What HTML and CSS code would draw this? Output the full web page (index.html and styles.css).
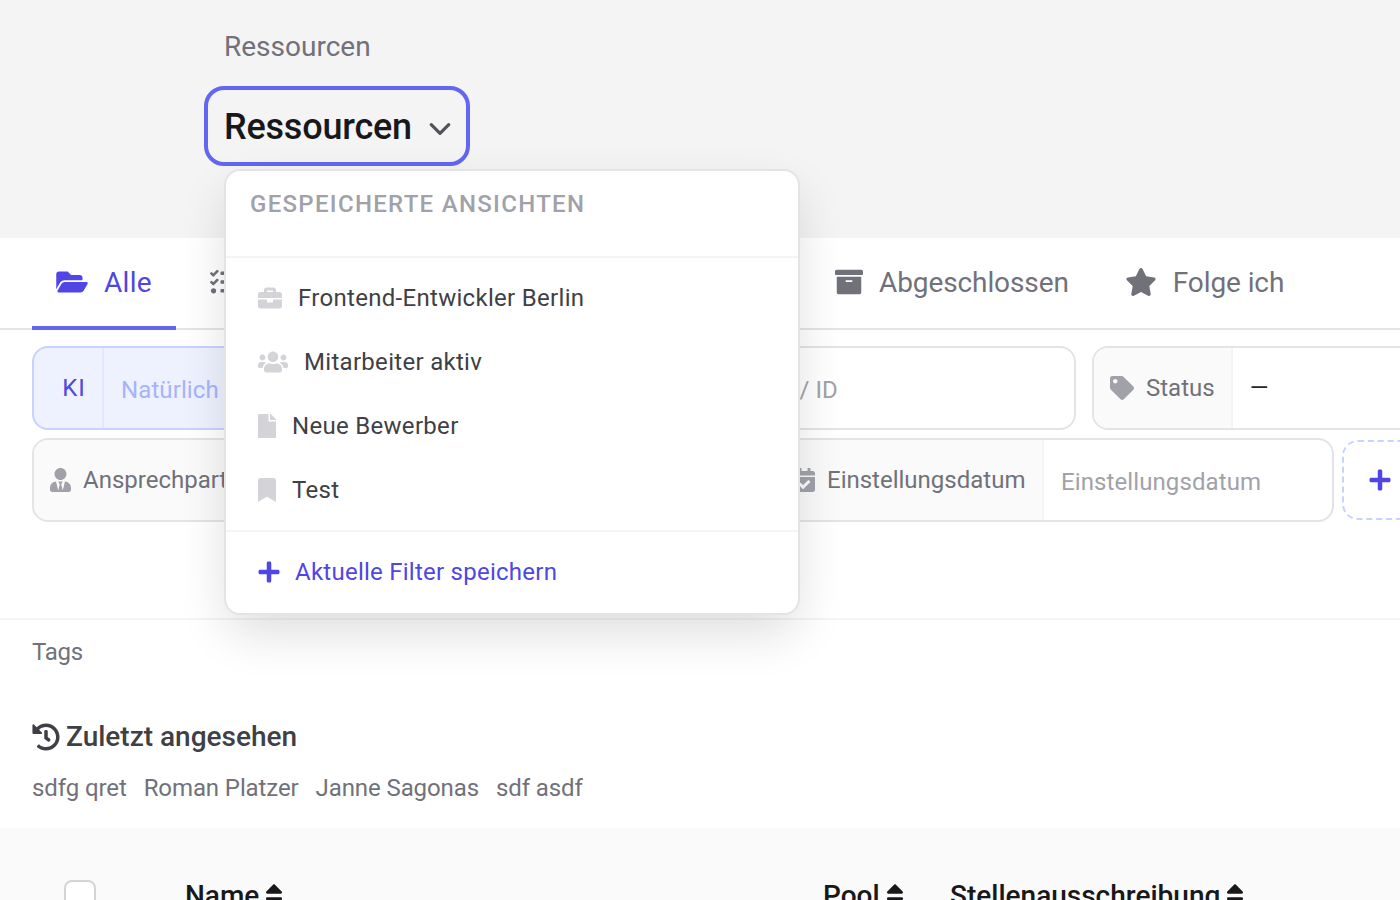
FILE: index.html
```html
<!DOCTYPE html>
<html lang="de">
<head>
    <meta charset="UTF-8">
    <title>Ressourcen</title>
    <link rel="stylesheet" href="styles.css">
</head>
<body>
    <div class="page">
        <!-- Header -->
        <div class="head">
            <div class="crumb">Ressourcen</div>
            <button class="view-btn">
                <span>Ressourcen</span>
                <svg class="chevron" viewBox="4 8 16 9"><path d="M5 9l7 7 7-7"/></svg>
            </button>
        </div>

        <!-- Tabs -->
        <div class="tabs">
            <div class="tab active">
                <svg class="tab-icon" viewBox="0 0 576 512"><path d="M572.694 292.093L500.27 416.248A63.997 63.997 0 0 1 444.989 448H45.025c-18.523 0-30.064-20.093-20.731-36.093l72.424-124.155A64 64 0 0 1 152 256h399.964c18.523 0 30.064 20.093 20.73 36.093zM152 224h328v-48c0-26.51-21.49-48-48-48H272l-64-64H48C21.49 64 0 85.49 0 112v278.046l69.077-118.418C86.214 242.25 117.989 224 152 224z"/></svg>
                Alle
            </div>
            <div class="tab tab-wide">
                <svg class="tab-icon" viewBox="0 0 512 512"><path d="M139.61 35.5a12 12 0 0 0-17 0L58.93 98.81l-22.7-22.12a12 12 0 0 0-17 0L3.53 92.41a12 12 0 0 0 0 17l47.59 47.4a12.78 12.78 0 0 0 17.61 0l15.59-15.62L156.52 69a12.09 12.09 0 0 0 .09-17zm0 159.19a12 12 0 0 0-17 0l-63.68 63.72-22.7-22.1a12 12 0 0 0-17 0L3.53 252a12 12 0 0 0 0 17L51 316.5a12.77 12.77 0 0 0 17.6 0l15.7-15.69 72.2-72.22a12 12 0 0 0 .09-16.9zM64 368c-26.49 0-48.59 21.5-48.59 48S37.53 464 64 464a48 48 0 0 0 0-96zm432 16H208a16 16 0 0 0-16 16v32a16 16 0 0 0 16 16h288a16 16 0 0 0 16-16v-32a16 16 0 0 0-16-16zm0-320H208a16 16 0 0 0-16 16v32a16 16 0 0 0 16 16h288a16 16 0 0 0 16-16V80a16 16 0 0 0-16-16zm0 160H208a16 16 0 0 0-16 16v32a16 16 0 0 0 16 16h288a16 16 0 0 0 16-16v-32a16 16 0 0 0-16-16z"/></svg>
            </div>
            <div class="tab">
                <svg class="tab-icon icon-archive" viewBox="0 0 512 512"><path d="M32 448c0 17.7 14.3 32 32 32h384c17.7 0 32-14.3 32-32V160H32v288zm160-212c0-6.6 5.4-12 12-12h104c6.6 0 12 5.4 12 12v8c0 6.6-5.4 12-12 12H204c-6.6 0-12-5.4-12-12v-8zM480 32H32C14.3 32 0 46.3 0 64v48c0 8.8 7.2 16 16 16h480c8.8 0 16-7.2 16-16V64c0-17.7-14.3-32-32-32z"/></svg>
                Abgeschlossen
            </div>
            <div class="tab">
                <svg class="tab-icon" viewBox="0 0 576 512"><path d="M259.3 17.8L194 150.2 47.9 171.5c-26.2 3.8-36.7 36.1-17.7 54.6l105.7 103-25 145.5c-4.5 26.3 23.2 46 46.4 33.7L288 439.6l130.7 68.7c23.2 12.2 50.9-7.4 46.4-33.7l-25-145.5 105.7-103c19-18.5 8.5-50.8-17.7-54.6L382 150.2 316.7 17.8c-11.7-23.6-45.6-23.9-57.4 0z"/></svg>
                Folge ich
            </div>
        </div>

        <!-- Filters -->
        <div class="filters">
            <div class="filter-row row-one">
                <div class="filter filter-ai">
                    <div class="filter-label">KI</div>
                    <div class="filter-value">Natürlich</div>
                </div>
                <div class="filter filter-search">
                    <div class="filter-value">Name / ID</div>
                </div>
                <div class="filter filter-status">
                    <div class="filter-label">
                        <svg class="filter-icon" viewBox="0 0 512 512"><path d="M0 252.118V48C0 21.49 21.49 0 48 0h204.118a48 48 0 0 1 33.941 14.059l211.882 211.882c18.745 18.745 18.745 49.137 0 67.882L293.823 497.941c-18.745 18.745-49.137 18.745-67.882 0L14.059 286.059A48 48 0 0 1 0 252.118zM112 64c-26.51 0-48 21.49-48 48s21.49 48 48 48 48-21.49 48-48-21.49-48-48-48z"/></svg>
                        Status
                    </div>
                    <div class="filter-value dash">—</div>
                </div>
            </div>
            <div class="filter-row row-two">
                <div class="filter filter-contact">
                    <div class="filter-label">
                        <svg class="filter-icon icon-narrow" viewBox="0 0 448 512"><path d="M224 256c70.7 0 128-57.3 128-128S294.7 0 224 0 96 57.3 96 128s57.3 128 128 128zm95.8 32.6L272 480l-32-136 32-56h-96l32 56-32 136-47.8-191.4C56.9 292 0 350.3 0 422.4V464c0 26.5 21.5 48 48 48h352c26.5 0 48-21.5 48-48v-41.6c0-72.1-56.9-130.4-128.2-133.8z"/></svg>
                        Ansprechpartner
                    </div>
                </div>
                <div class="filter filter-date">
                    <div class="filter-label">
                        <svg class="filter-icon icon-narrow" viewBox="0 0 448 512"><path d="M436 160H12c-6.627 0-12-5.373-12-12v-36c0-26.51 21.49-48 48-48h48V12c0-6.627 5.373-12 12-12h40c6.627 0 12 5.373 12 12v52h128V12c0-6.627 5.373-12 12-12h40c6.627 0 12 5.373 12 12v52h48c26.51 0 48 21.49 48 48v36c0 6.627-5.373 12-12 12zM12 192h424c6.627 0 12 5.373 12 12v260c0 26.51-21.49 48-48 48H48c-26.51 0-48-21.49-48-48V204c0-6.627 5.373-12 12-12zm333.296 95.947l-28.169-28.398c-4.667-4.705-12.265-4.736-16.97-.068L194.12 364.665l-45.98-46.352c-4.667-4.705-12.266-4.736-16.971-.068l-28.397 28.17c-4.705 4.667-4.736 12.265-.068 16.97l82.601 83.269c4.667 4.705 12.265 4.736 16.97.068l142.953-141.805c4.705-4.667 4.736-12.265.068-16.97z"/></svg>
                        Einstellungsdatum
                    </div>
                    <div class="filter-value">Einstellungsdatum</div>
                </div>
                <div class="add-filter">
                    <svg class="plus-icon" viewBox="0 0 448 512"><path d="M416 208H272V64c0-17.67-14.33-32-32-32h-32c-17.67 0-32 14.33-32 32v144H32c-17.67 0-32 14.33-32 32v32c0 17.67 14.33 32 32 32h144v144c0 17.67 14.33 32 32 32h32c17.67 0 32-14.33 32-32V304h144c17.67 0 32-14.33 32-32v-32c0-17.67-14.33-32-32-32z"/></svg>
                </div>
            </div>
        </div>

        <!-- Tags and recent -->
        <div class="tags">Tags</div>
        <div class="recent">
            <h2>
                <svg class="history-icon" viewBox="0 0 512 512"><path d="M504 255.531c.253 136.64-111.18 248.372-247.82 248.468-59.015.042-113.223-20.53-155.822-54.911-11.077-8.94-11.905-25.541-1.839-35.607l11.267-11.267c8.609-8.609 22.353-9.551 31.891-1.984C173.062 425.135 212.781 440 256 440c101.705 0 184-82.311 184-184 0-101.705-82.311-184-184-184-48.814 0-93.149 18.969-126.068 49.932l50.754 50.754c10.08 10.08 2.941 27.314-11.313 27.314H24c-8.837 0-16-7.163-16-16V38.627c0-14.254 17.234-21.393 27.314-11.314l49.372 49.372C129.209 34.136 189.552 8 256 8c136.81 0 247.747 110.78 248 247.531zm-180.912 78.784l9.823-12.63c8.138-10.463 6.253-25.542-4.21-33.679L288 256.349V152c0-13.255-10.745-24-24-24h-16c-13.255 0-24 10.745-24 24v135.651l65.409 50.874c10.463 8.137 25.541 6.253 33.679-4.21z"/></svg>
                Zuletzt angesehen
            </h2>
            <div class="recent-links">
                <span>sdfg qret</span>
                <span>Roman Platzer</span>
                <span>Janne Sagonas</span>
                <span>sdf asdf</span>
            </div>
        </div>

        <!-- Table head -->
        <div class="table-head">
            <div class="checkbox"></div>
            <div class="th">Name <svg class="sort-icon" viewBox="0 0 320 512"><path d="M41 288h238c21.4 0 32.1 25.9 17 41L177 448c-9.4 9.4-24.6 9.4-33.9 0L24 329c-15.1-15.1-4.4-41 17-41zm255-105L177 64c-9.4-9.4-24.6-9.4-33.9 0L24 183c-15.1 15.1-4.4 41 17 41h238c21.4 0 32.1-25.9 17-41z"/></svg></div>
            <div class="th">Pool <svg class="sort-icon" viewBox="0 0 320 512"><path d="M41 288h238c21.4 0 32.1 25.9 17 41L177 448c-9.4 9.4-24.6 9.4-33.9 0L24 329c-15.1-15.1-4.4-41 17-41zm255-105L177 64c-9.4-9.4-24.6-9.4-33.9 0L24 183c-15.1 15.1-4.4 41 17 41h238c21.4 0 32.1-25.9 17-41z"/></svg></div>
            <div class="th">Stellenausschreibung <svg class="sort-icon" viewBox="0 0 320 512"><path d="M41 288h238c21.4 0 32.1 25.9 17 41L177 448c-9.4 9.4-24.6 9.4-33.9 0L24 329c-15.1-15.1-4.4-41 17-41zm255-105L177 64c-9.4-9.4-24.6-9.4-33.9 0L24 183c-15.1 15.1-4.4 41 17 41h238c21.4 0 32.1-25.9 17-41z"/></svg></div>
        </div>

        <!-- Saved views menu -->
        <div class="menu">
            <div class="menu-title">Gespeicherte Ansichten</div>
            <div class="menu-list">
                <div class="menu-item">
                    <svg class="menu-icon icon-case" viewBox="0 0 512 512"><path d="M320 336c0 8.84-7.16 16-16 16h-96c-8.84 0-16-7.16-16-16v-48H0v144c0 25.6 22.4 48 48 48h416c25.6 0 48-22.4 48-48V288H320v48zm144-208h-80V80c0-25.6-22.4-48-48-48H176c-25.6 0-48 22.4-48 48v48H48c-25.6 0-48 22.4-48 48v80h512v-80c0-25.6-22.4-48-48-48zm-144 0H192V96h128v32z"/></svg>
                    Frontend-Entwickler Berlin
                </div>
                <div class="menu-item">
                    <svg class="menu-icon icon-users" viewBox="0 0 640 512"><path d="M96 224c35.3 0 64-28.7 64-64s-28.7-64-64-64-64 28.7-64 64 28.7 64 64 64zm448 0c35.3 0 64-28.7 64-64s-28.7-64-64-64-64 28.7-64 64 28.7 64 64 64zm32 32h-64c-17.6 0-33.5 7.1-45.1 18.6 40.3 22.1 68.9 62 75.1 109.4h66c17.7 0 32-14.3 32-32v-32c0-35.3-28.7-64-64-64zm-256 0c61.9 0 112-50.1 112-112S381.9 32 320 32 208 82.1 208 144s50.1 112 112 112zm76.8 32h-8.3c-20.8 10-43.9 16-68.5 16s-47.6-6-68.5-16h-8.3C179.6 288 128 339.6 128 403.2V432c0 26.5 21.5 48 48 48h288c26.5 0 48-21.5 48-48v-28.8c0-63.6-51.6-115.2-115.2-115.2zm-223.7-13.4C161.5 263.1 145.6 256 128 256H64c-35.3 0-64 28.7-64 64v32c0 17.7 14.3 32 32 32h65.9c6.3-47.4 34.9-87.3 75.2-109.4z"/></svg>
                    Mitarbeiter aktiv
                </div>
                <div class="menu-item">
                    <svg class="menu-icon icon-page" viewBox="0 0 384 512"><path d="M224 136V0H24C10.7 0 0 10.7 0 24v464c0 13.3 10.7 24 24 24h336c13.3 0 24-10.7 24-24V160H248c-13.2 0-24-10.8-24-24zm160-14.1v6.1H256V0h6.1c6.4 0 12.5 2.5 17 7l97.9 98c4.5 4.5 7 10.6 7 16.9z"/></svg>
                    Neue Bewerber
                </div>
                <div class="menu-item">
                    <svg class="menu-icon icon-page" viewBox="0 0 384 512"><path d="M0 512V48C0 21.49 21.49 0 48 0h288c26.51 0 48 21.49 48 48v464L192 400 0 512z"/></svg>
                    Test
                </div>
            </div>
            <div class="menu-foot">
                <svg class="plus-icon" viewBox="0 0 448 512"><path d="M416 208H272V64c0-17.67-14.33-32-32-32h-32c-17.67 0-32 14.33-32 32v144H32c-17.67 0-32 14.33-32 32v32c0 17.67 14.33 32 32 32h144v144c0 17.67 14.33 32 32 32h32c17.67 0 32-14.33 32-32V304h144c17.67 0 32-14.33 32-32v-32c0-17.67-14.33-32-32-32z"/></svg>
                Aktuelle Filter speichern
            </div>
        </div>
    </div>
</body>
</html>
```

FILE: styles.css
```css
* {
    margin: 0;
    padding: 0;
    box-sizing: border-box;
}

body {
    background-color: #fff;
    color: #71717a;
    font-family: Roboto, "Liberation Sans", sans-serif;
    font-size: 24px;
    line-height: 28px;
}

svg {
    fill: currentColor;
    flex-shrink: 0;
}

.page {
    position: relative;
    width: 1400px;
    height: 900px;
    overflow: hidden;
}

/* Header */
.head {
    height: 238px;
    padding: 33px 0 0 204px;
    background-color: #f4f4f5;
}

.crumb {
    margin-left: 20px;
    font-size: 28px;
}

.view-btn {
    display: flex;
    align-items: center;
    gap: 18px;
    width: 266px;
    height: 80px;
    margin-top: 25px;
    padding: 2px 16px 0;
    background: none;
    border: 4px solid #6366f1;
    border-radius: 20px;
    color: #18181b;
    font-family: inherit;
    font-size: 36px;
    font-weight: 500;
    letter-spacing: -0.2px;
}

.chevron {
    width: 20px;
    height: 12px;
    margin-top: 4px;
    overflow: visible;
    fill: none;
    stroke: #52525b;
    stroke-width: 2.6;
    stroke-linecap: round;
    stroke-linejoin: round;
}

/* Tabs */
.tabs {
    display: flex;
    gap: 8px;
    height: 92px;
    padding-left: 32px;
    border-bottom: 2px solid #e4e4e7;
}

.tab {
    display: flex;
    align-items: center;
    gap: 16px;
    height: 92px;
    padding: 2px 24px 0;
    border-bottom: 4px solid transparent;
    font-size: 28px;
    letter-spacing: -0.1px;
}

.tab.active {
    width: 144px;
    border-bottom-color: #6366f1;
    color: #4f46e5;
    letter-spacing: 0.3px;
}

.tab-wide {
    width: 619px;
}

.tab-icon {
    width: 32px;
    height: 28px;
    margin-top: -2px;
}

.icon-archive {
    width: 28px;
}

/* Filters */
.filters {
    display: flex;
    flex-direction: column;
    gap: 8px;
    height: 290px;
    padding: 16px 0 0 32px;
    border-bottom: 2px solid #f4f4f5;
}

.filter-row {
    display: flex;
    height: 84px;
}

.row-one {
    gap: 16px;
}

.row-two {
    gap: 8px;
}

.filter {
    display: flex;
    flex: none;
    border: 2px solid #e4e4e7;
    border-radius: 16px;
    overflow: hidden;
}

.filter-label {
    display: flex;
    align-items: center;
    gap: 12px;
    padding: 0 16px;
    background-color: #fafafa;
    border-right: 2px solid #f4f4f5;
}

.filter-value {
    display: flex;
    align-items: center;
    padding: 4px 17px 0;
    color: #a1a1aa;
    letter-spacing: 0.1px;
}

.filter-icon {
    width: 24px;
    height: 24px;
    color: #a1a1aa;
}

.icon-narrow {
    width: 21px;
}

.filter-ai {
    width: 662px;
    background-color: #eef2ff;
    border-color: #c7d2fe;
}

.filter-ai .filter-label {
    width: 70px;
    padding: 0 0 0 12px;
    justify-content: center;
    background-color: transparent;
    border-right-color: #e0e7ff;
    color: #4f46e5;
    letter-spacing: 1px;
}

.filter-ai .filter-value {
    color: #a5b4fc;
}

.filter-search {
    width: 366px;
    background-color: #fff;
}

.filter-status {
    width: 420px;
}

.filter-status .filter-value.dash {
    padding: 0 17px;
    color: #27272a;
}

.filter-contact {
    width: 736px;
    background-color: #fafafa;
}

.filter-date {
    width: 558px;
}

.filter-date .filter-label {
    width: 266px;
}

.filter-date .filter-value {
    flex: 1;
}

.add-filter {
    display: flex;
    flex: none;
    align-items: center;
    width: 120px;
    height: 80px;
    margin-top: 2px;
    padding-left: 25px;
    border: 2px dashed #c7d2fe;
    border-radius: 16px;
}

.plus-icon {
    width: 22px;
    height: 24px;
    color: #4f46e5;
}

/* Tags and recent */
.tags {
    height: 70px;
    padding: 18px 0 0 32px;
    letter-spacing: -0.3px;
}

.recent {
    height: 138px;
    padding: 30px 32px 0;
}

.recent h2 {
    display: flex;
    align-items: center;
    gap: 6px;
    height: 34px;
    color: #3f3f46;
    font-size: 28px;
    font-weight: 500;
}

.history-icon {
    width: 28px;
    height: 28px;
}

.recent-links {
    display: flex;
    gap: 17px;
    margin-top: 20px;
    letter-spacing: -0.1px;
}

/* Table head */
.table-head {
    display: grid;
    grid-template-columns: 121px 638px 127px auto;
    height: 72px;
    padding: 52px 0 0 64px;
    background-color: #fafafa;
}

.checkbox {
    width: 32px;
    height: 32px;
    background-color: #fff;
    border: 2px solid #d4d4d8;
    border-radius: 8px;
}

.th {
    margin-top: -1px;
    color: #18181b;
    font-size: 28px;
    line-height: 34px;
    font-weight: 500;
    white-space: nowrap;
}

.sort-icon {
    width: 18px;
    height: 29px;
    margin-left: -1px;
    vertical-align: -5px;
}

/* Saved views menu */
.menu {
    position: absolute;
    top: 169px;
    left: 224px;
    width: 576px;
    height: 446px;
    background-color: #fff;
    border: 2px solid #e4e4e7;
    border-radius: 16px;
    box-shadow: 0 20px 50px -4px rgba(0, 0, 0, 0.14);
    overflow: hidden;
}

.menu-title {
    height: 87px;
    padding: 19px 24px 0;
    border-bottom: 2px solid #f4f4f5;
    color: #a1a1aa;
    font-weight: 500;
    letter-spacing: 1.3px;
    text-transform: uppercase;
}

.menu-list {
    height: 274px;
    padding-top: 8px;
    border-bottom: 2px solid #f4f4f5;
}

.menu-item {
    display: flex;
    align-items: center;
    gap: 16px;
    height: 64px;
    padding-left: 32px;
    color: #3f3f46;
    letter-spacing: 0.3px;
}

.menu-icon {
    height: 24px;
    color: #d4d4d8;
}

.icon-case {
    width: 24px;
}

.icon-users {
    width: 30px;
}

.icon-page {
    width: 18px;
}

.menu-foot {
    display: flex;
    align-items: center;
    gap: 15px;
    height: 81px;
    padding: 0 0 2px 32px;
    color: #4f46e5;
    letter-spacing: 0.25px;
}
```
